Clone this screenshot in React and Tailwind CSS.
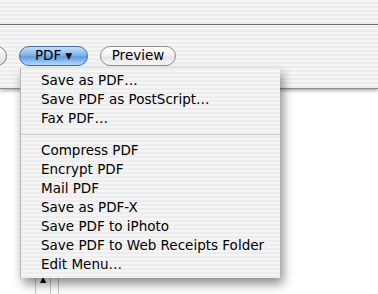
import React from 'react';

const stripes = 'bg-[repeating-linear-gradient(0deg,#ededed_0px,#ededed_2px,#f5f5f5_2px,#f5f5f5_4px)]';

const groupOne = ['Save as PDF…', 'Save PDF as PostScript…', 'Fax PDF…'];
const groupTwo = [
  'Compress PDF',
  'Encrypt PDF',
  'Mail PDF',
  'Save as PDF-X',
  'Save PDF to iPhoto',
  'Save PDF to Web Receipts Folder',
  'Edit Menu…',
];

function MenuItem({ label }) {
  return (
    <div className="h-[19px] pl-[20px] flex items-center text-[13.5px] text-black leading-none">
      {label}
    </div>
  );
}

export default function App() {
  return (
    <div
      className="relative w-[378px] h-[294px] overflow-hidden bg-white"
      style={{ fontFamily: '"DejaVu Sans", "Liberation Sans", sans-serif' }}
    >
      {/* sheet with toolbar */}
      <div className={`h-[89px] ${stripes} border-b border-[#8a8a8a] shadow-[0_2px_3px_rgba(0,0,0,0.3)]`}>
        <div className="h-[25px] border-b border-[#6e6e6e]" />
        <div className="flex items-center gap-[12px] mt-[21px] h-[20px]">
          <div className="shrink-0 ml-[-13px] w-[20px] h-[20px] rounded-full border border-[#7d7d7d] bg-[linear-gradient(#ffffff,#dcdcdc)]" />
          <div className="shrink-0 w-[69px] h-[20px] rounded-full border border-[#3f6fb0] bg-[linear-gradient(#c7e0fa_0%,#7fb4ee_45%,#5d9be6_55%,#b8dcfb_100%)] flex items-center justify-center gap-[4px] text-[13.5px] text-black leading-none">
            <span>PDF</span>
            <span className="text-[9px]">▼</span>
          </div>
          <div className="shrink-0 w-[76px] h-[20px] rounded-full border border-[#8c8c8c] bg-[linear-gradient(#ffffff_0%,#f2f2f2_50%,#e2e2e2_55%,#fafafa_100%)] flex items-center justify-center text-[13.5px] text-black leading-none">
            Preview
          </div>
          <div className="shrink-0 ml-auto mr-[-36px] w-[34px] h-[20px] rounded-full border border-[#8c8c8c] bg-white" />
        </div>
      </div>

      {/* table stub peeking below */}
      <div className="ml-[35px] mt-[185px] w-[24px] h-[20px] border-l border-r border-[#c8c8c8] flex">
        <div className="w-[15px] border-r border-[#c8c8c8] flex justify-center pt-[2px] text-[8px] leading-none text-black">▲</div>
      </div>

      {/* popup menu */}
      <div className={`absolute left-[20px] top-[68px] w-[260px] h-[210px] ${stripes} border-l border-[#b5b5b5] pt-[3px] shadow-[3px_6px_10px_rgba(0,0,0,0.45)]`}>
        {groupOne.map(label => (
          <MenuItem key={label} label={label} />
        ))}
        <div className="h-[13px] flex items-center">
          <div className="w-full h-px bg-[#cbcbcb]" />
        </div>
        {groupTwo.map(label => (
          <MenuItem key={label} label={label} />
        ))}
      </div>
    </div>
  );
}
